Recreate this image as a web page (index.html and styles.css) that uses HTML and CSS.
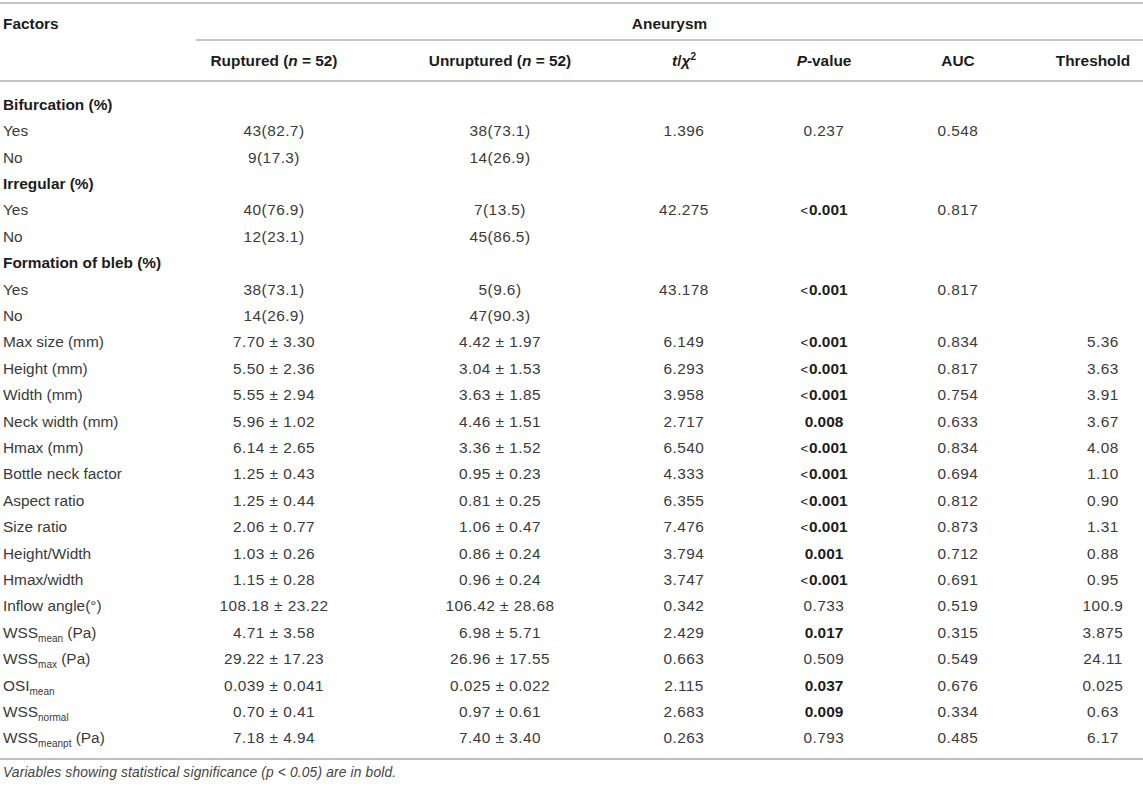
FILE: index.html
```html
<!DOCTYPE html>
<html>
<head>
<meta charset="utf-8">
<link rel="stylesheet" href="styles.css">
</head>
<body>
<div class="table">
  <div class="row hrow1">
    <div class="cell lab hb"><span>Factors</span></div>
    <div class="span"><div class="aneurysm hb">Aneurysm</div></div>
  </div>
  <div class="row hrow2">
    <div class="cell lab"></div>
    <div class="cell c2 hb"><span>Ruptured (<i>n</i> = 52)</span></div>
    <div class="cell c3 hb"><span>Unruptured (<i>n</i> = 52)</span></div>
    <div class="cell c4 hb"><span><i>t</i>/<i>χ</i><sup>2</sup></span></div>
    <div class="cell c5 hb"><span><i>P</i>-value</span></div>
    <div class="cell c6 hb"><span>AUC</span></div>
    <div class="cell c7 hb th"><span>Threshold</span></div>
  </div>
  <div class="tbody">
    <div class="row"><div class="cell lab hb"><span>Bifurcation (%)</span></div></div>
    <div class="row"><div class="cell lab"><span>Yes</span></div><div class="cell c2"><span>43(82.7)</span></div><div class="cell c3"><span>38(73.1)</span></div><div class="cell c4"><span>1.396</span></div><div class="cell c5"><span>0.237</span></div><div class="cell c6"><span>0.548</span></div></div>
    <div class="row"><div class="cell lab"><span>No</span></div><div class="cell c2"><span>9(17.3)</span></div><div class="cell c3"><span>14(26.9)</span></div></div>
    <div class="row"><div class="cell lab hb"><span>Irregular (%)</span></div></div>
    <div class="row"><div class="cell lab"><span>Yes</span></div><div class="cell c2"><span>40(76.9)</span></div><div class="cell c3"><span>7(13.5)</span></div><div class="cell c4"><span>42.275</span></div><div class="cell c5"><span class="b"><span class="lt">&lt;</span>0.001</span></div><div class="cell c6"><span>0.817</span></div></div>
    <div class="row"><div class="cell lab"><span>No</span></div><div class="cell c2"><span>12(23.1)</span></div><div class="cell c3"><span>45(86.5)</span></div></div>
    <div class="row"><div class="cell lab hb"><span>Formation of bleb (%)</span></div></div>
    <div class="row"><div class="cell lab"><span>Yes</span></div><div class="cell c2"><span>38(73.1)</span></div><div class="cell c3"><span>5(9.6)</span></div><div class="cell c4"><span>43.178</span></div><div class="cell c5"><span class="b"><span class="lt">&lt;</span>0.001</span></div><div class="cell c6"><span>0.817</span></div></div>
    <div class="row"><div class="cell lab"><span>No</span></div><div class="cell c2"><span>14(26.9)</span></div><div class="cell c3"><span>47(90.3)</span></div></div>
    <div class="row"><div class="cell lab"><span>Max size (mm)</span></div><div class="cell c2"><span>7.70 ± 3.30</span></div><div class="cell c3"><span>4.42 ± 1.97</span></div><div class="cell c4"><span>6.149</span></div><div class="cell c5"><span class="b"><span class="lt">&lt;</span>0.001</span></div><div class="cell c6"><span>0.834</span></div><div class="cell c7"><span>5.36</span></div></div>
    <div class="row"><div class="cell lab"><span>Height (mm)</span></div><div class="cell c2"><span>5.50 ± 2.36</span></div><div class="cell c3"><span>3.04 ± 1.53</span></div><div class="cell c4"><span>6.293</span></div><div class="cell c5"><span class="b"><span class="lt">&lt;</span>0.001</span></div><div class="cell c6"><span>0.817</span></div><div class="cell c7"><span>3.63</span></div></div>
    <div class="row"><div class="cell lab"><span>Width (mm)</span></div><div class="cell c2"><span>5.55 ± 2.94</span></div><div class="cell c3"><span>3.63 ± 1.85</span></div><div class="cell c4"><span>3.958</span></div><div class="cell c5"><span class="b"><span class="lt">&lt;</span>0.001</span></div><div class="cell c6"><span>0.754</span></div><div class="cell c7"><span>3.91</span></div></div>
    <div class="row"><div class="cell lab"><span>Neck width (mm)</span></div><div class="cell c2"><span>5.96 ± 1.02</span></div><div class="cell c3"><span>4.46 ± 1.51</span></div><div class="cell c4"><span>2.717</span></div><div class="cell c5"><span class="b">0.008</span></div><div class="cell c6"><span>0.633</span></div><div class="cell c7"><span>3.67</span></div></div>
    <div class="row"><div class="cell lab"><span>Hmax (mm)</span></div><div class="cell c2"><span>6.14 ± 2.65</span></div><div class="cell c3"><span>3.36 ± 1.52</span></div><div class="cell c4"><span>6.540</span></div><div class="cell c5"><span class="b"><span class="lt">&lt;</span>0.001</span></div><div class="cell c6"><span>0.834</span></div><div class="cell c7"><span>4.08</span></div></div>
    <div class="row"><div class="cell lab"><span>Bottle neck factor</span></div><div class="cell c2"><span>1.25 ± 0.43</span></div><div class="cell c3"><span>0.95 ± 0.23</span></div><div class="cell c4"><span>4.333</span></div><div class="cell c5"><span class="b"><span class="lt">&lt;</span>0.001</span></div><div class="cell c6"><span>0.694</span></div><div class="cell c7"><span>1.10</span></div></div>
    <div class="row"><div class="cell lab"><span>Aspect ratio</span></div><div class="cell c2"><span>1.25 ± 0.44</span></div><div class="cell c3"><span>0.81 ± 0.25</span></div><div class="cell c4"><span>6.355</span></div><div class="cell c5"><span class="b"><span class="lt">&lt;</span>0.001</span></div><div class="cell c6"><span>0.812</span></div><div class="cell c7"><span>0.90</span></div></div>
    <div class="row"><div class="cell lab"><span>Size ratio</span></div><div class="cell c2"><span>2.06 ± 0.77</span></div><div class="cell c3"><span>1.06 ± 0.47</span></div><div class="cell c4"><span>7.476</span></div><div class="cell c5"><span class="b"><span class="lt">&lt;</span>0.001</span></div><div class="cell c6"><span>0.873</span></div><div class="cell c7"><span>1.31</span></div></div>
    <div class="row"><div class="cell lab"><span>Height/Width</span></div><div class="cell c2"><span>1.03 ± 0.26</span></div><div class="cell c3"><span>0.86 ± 0.24</span></div><div class="cell c4"><span>3.794</span></div><div class="cell c5"><span class="b">0.001</span></div><div class="cell c6"><span>0.712</span></div><div class="cell c7"><span>0.88</span></div></div>
    <div class="row"><div class="cell lab"><span>Hmax/width</span></div><div class="cell c2"><span>1.15 ± 0.28</span></div><div class="cell c3"><span>0.96 ± 0.24</span></div><div class="cell c4"><span>3.747</span></div><div class="cell c5"><span class="b"><span class="lt">&lt;</span>0.001</span></div><div class="cell c6"><span>0.691</span></div><div class="cell c7"><span>0.95</span></div></div>
    <div class="row"><div class="cell lab"><span>Inflow angle(°)</span></div><div class="cell c2"><span>108.18 ± 23.22</span></div><div class="cell c3"><span>106.42 ± 28.68</span></div><div class="cell c4"><span>0.342</span></div><div class="cell c5"><span>0.733</span></div><div class="cell c6"><span>0.519</span></div><div class="cell c7"><span>100.9</span></div></div>
    <div class="row"><div class="cell lab"><span>WSS<sub>mean</sub> (Pa)</span></div><div class="cell c2"><span>4.71 ± 3.58</span></div><div class="cell c3"><span>6.98 ± 5.71</span></div><div class="cell c4"><span>2.429</span></div><div class="cell c5"><span class="b">0.017</span></div><div class="cell c6"><span>0.315</span></div><div class="cell c7"><span>3.875</span></div></div>
    <div class="row"><div class="cell lab"><span>WSS<sub>max</sub> (Pa)</span></div><div class="cell c2"><span>29.22 ± 17.23</span></div><div class="cell c3"><span>26.96 ± 17.55</span></div><div class="cell c4"><span>0.663</span></div><div class="cell c5"><span>0.509</span></div><div class="cell c6"><span>0.549</span></div><div class="cell c7"><span>24.11</span></div></div>
    <div class="row"><div class="cell lab"><span>OSI<sub>mean</sub></span></div><div class="cell c2"><span>0.039 ± 0.041</span></div><div class="cell c3"><span>0.025 ± 0.022</span></div><div class="cell c4"><span>2.115</span></div><div class="cell c5"><span class="b">0.037</span></div><div class="cell c6"><span>0.676</span></div><div class="cell c7"><span>0.025</span></div></div>
    <div class="row"><div class="cell lab"><span>WSS<sub>normal</sub></span></div><div class="cell c2"><span>0.70 ± 0.41</span></div><div class="cell c3"><span>0.97 ± 0.61</span></div><div class="cell c4"><span>2.683</span></div><div class="cell c5"><span class="b">0.009</span></div><div class="cell c6"><span>0.334</span></div><div class="cell c7"><span>0.63</span></div></div>
    <div class="row"><div class="cell lab"><span>WSS<sub>meanpt</sub> (Pa)</span></div><div class="cell c2"><span>7.18 ± 4.94</span></div><div class="cell c3"><span>7.40 ± 3.40</span></div><div class="cell c4"><span>0.263</span></div><div class="cell c5"><span>0.793</span></div><div class="cell c6"><span>0.485</span></div><div class="cell c7"><span>6.17</span></div></div>
  </div>
  <div class="rule"></div>
</div>
<p class="note">Variables showing statistical significance (<i>p</i> &lt; 0.05) are in bold.</p>
</body>
</html>
```

FILE: styles.css
```css
html, body {
  margin: 0;
  padding: 0;
  background: #ffffff;
  overflow: hidden;
}
body {
  font-family: "Liberation Sans", Arial, sans-serif;
  font-size: 15.4px;
  color: #3a3a3a;
  width: 1143px;
  letter-spacing: 0.45px;
}
.table {
  margin-top: 2px;
  border-top: 2px solid #c3c3c3;
}
.row {
  display: grid;
  grid-template-columns: 196px 156px 296px 72px 208px 60px 155px;
  height: 26px;
  align-items: center;
  white-space: nowrap;
}
.tbody .row:nth-child(5n+1),
.tbody .row:nth-child(5n+3) {
  height: 27px;
}
.cell {
  display: flex;
  justify-content: center;
  min-width: 0;
}
.cell.lab {
  justify-content: flex-start;
  padding-left: 3px;
  overflow: visible;
  letter-spacing: 0;
}
.c7 { padding-left: 75px; }
.c7.th { padding-left: 55px; }
.hb, .b {
  font-weight: bold;
  color: #1c1c1c;
  letter-spacing: 0;
}
.lt { font-weight: normal; font-size: 13px; margin-right: 1px; }
.hrow1 {
  height: 37px;
  align-items: start;
}
.hrow1 .lab { padding-top: 11px; }
.span {
  grid-column: 2 / 8;
  height: 37px;
  border-bottom: 2px solid #c3c3c3;
  display: flex;
  justify-content: center;
  align-items: center;
  box-sizing: border-box;
}
.aneurysm { padding-top: 4px; }
.hrow2 {
  height: 41px;
  border-bottom: 2px solid #c3c3c3;
  box-sizing: border-box;
  padding-top: 1px;
}
.tbody {
  padding-top: 9px;
  padding-bottom: 7px;
}
.rule {
  height: 2px;
  background: #bdbdbd;
}
sub {
  font-size: 10px;
  vertical-align: -4px;
  line-height: 0;
  letter-spacing: 0;
}
sup {
  font-size: 10px;
  vertical-align: 6px;
  line-height: 0;
}
.note {
  margin: 5px 0 0 3px;
  font-style: italic;
  font-size: 13.8px;
  color: #444;
  letter-spacing: 0.15px;
}
```
